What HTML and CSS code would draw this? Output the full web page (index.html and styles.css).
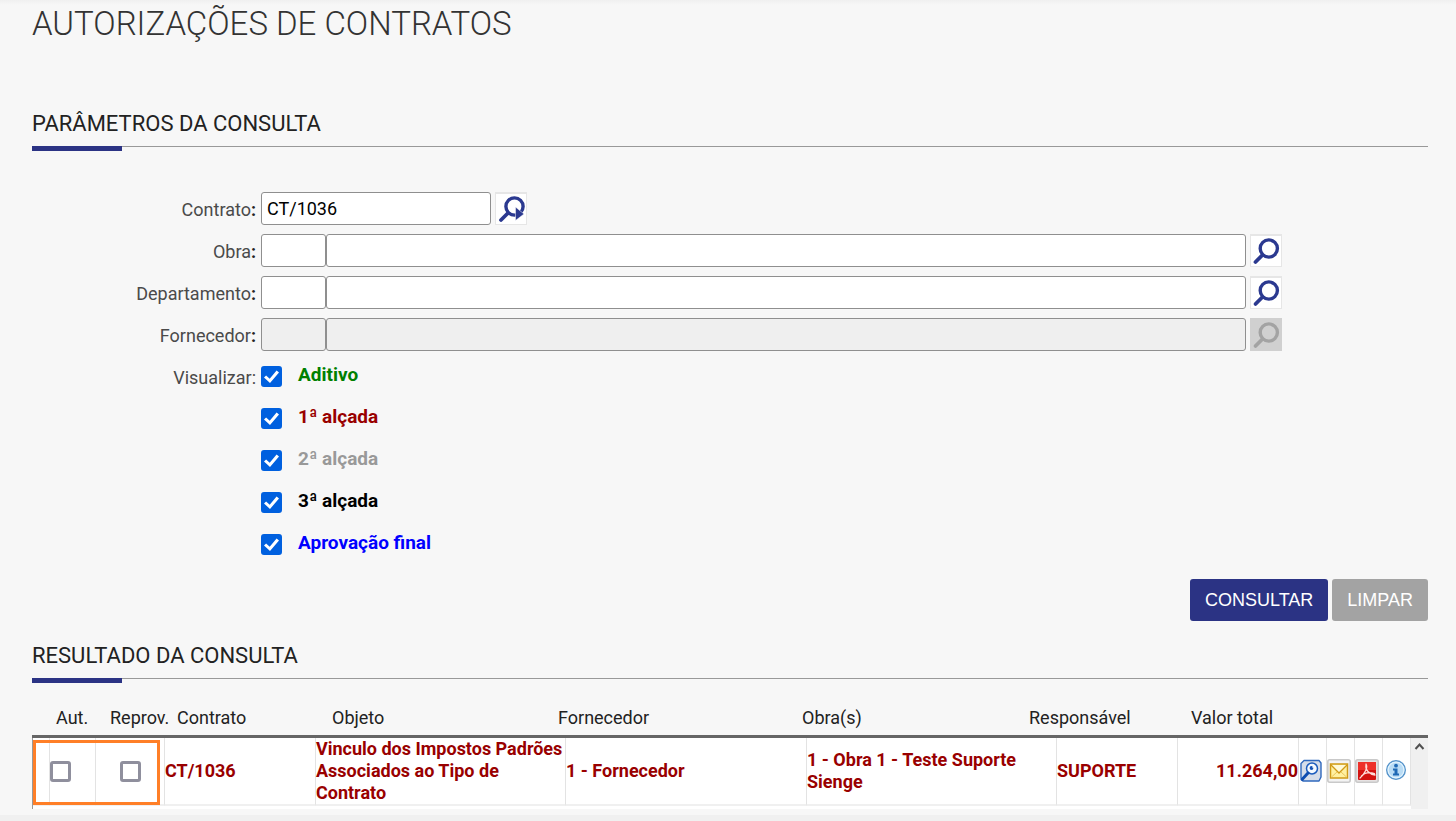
FILE: index.html
```html
<!DOCTYPE html>
<html lang="pt-BR">
<head>
  <meta charset="UTF-8">
  <meta name="viewport" content="width=device-width, initial-scale=1.0">
  <title>Autorizações de Contratos</title>
  <link rel="stylesheet" href="styles.css">
</head>
<body>
  <svg class="sprite" aria-hidden="true">
    <symbol id="icon-search" viewBox="0 0 30 30">
      <circle cx="17.800" cy="12.500" r="8.600" fill="none" stroke="currentColor" stroke-width="3.400"/>
      <path d="M11.500 19L4.500 26" fill="none" stroke="currentColor" stroke-width="3.800" stroke-linecap="round"/>
    </symbol>
    <symbol id="icon-search-go" viewBox="0 0 30 30">
      <circle cx="18.500" cy="12.500" r="8.600" fill="none" stroke="currentColor" stroke-width="3.400"/>
      <path d="M12 19L5 26" fill="none" stroke="currentColor" stroke-width="3.800" stroke-linecap="round"/>
      <path d="M19.500 13v13.500l8.500-6.500z" fill="currentColor" stroke="#fff" stroke-width=".5"/>
    </symbol>
  </svg>

  <main class="page">
    <h1>AUTORIZAÇÕES DE CONTRATOS</h1>

    <h2 class="section-title">PARÂMETROS DA CONSULTA</h2>
    <form class="filters">
      <div class="row">
        <label for="contrato">Contrato<b>:</b></label>
        <div class="field">
          <input class="text contract" id="contrato" type="text" value="CT/1036">
          <button class="lookup" type="button" aria-label="Pesquisar contrato"><svg><use href="#icon-search-go"/></svg></button>
        </div>
      </div>
      <div class="row">
        <label for="obra">Obra<b>:</b></label>
        <div class="field">
          <input class="text code" id="obra" type="text">
          <input class="text name" type="text" aria-label="Nome da obra">
          <button class="lookup" type="button" aria-label="Pesquisar obra"><svg><use href="#icon-search"/></svg></button>
        </div>
      </div>
      <div class="row">
        <label for="departamento">Departamento<b>:</b></label>
        <div class="field">
          <input class="text code" id="departamento" type="text">
          <input class="text name" type="text" aria-label="Nome do departamento">
          <button class="lookup" type="button" aria-label="Pesquisar departamento"><svg><use href="#icon-search"/></svg></button>
        </div>
      </div>
      <div class="row">
        <label for="fornecedor">Fornecedor<b>:</b></label>
        <div class="field">
          <input class="text code" id="fornecedor" type="text" disabled>
          <input class="text name" type="text" aria-label="Nome do fornecedor" disabled>
          <button class="lookup" type="button" aria-label="Pesquisar fornecedor" disabled><svg><use href="#icon-search"/></svg></button>
        </div>
      </div>
      <div class="row" role="group" aria-labelledby="visualizar">
        <span class="row-label" id="visualizar">Visualizar:</span>
        <div class="options">
          <div class="option"><input class="check" type="checkbox" id="aditivo" checked><label class="additive" for="aditivo">Aditivo</label></div>
          <div class="option"><input class="check" type="checkbox" id="alcada1" checked><label class="level-1" for="alcada1">1ª alçada</label></div>
          <div class="option"><input class="check" type="checkbox" id="alcada2" checked><label class="level-2" for="alcada2">2ª alçada</label></div>
          <div class="option"><input class="check" type="checkbox" id="alcada3" checked><label class="level-3" for="alcada3">3ª alçada</label></div>
          <div class="option"><input class="check" type="checkbox" id="final" checked><label class="final" for="final">Aprovação final</label></div>
        </div>
      </div>
      <div class="actions">
        <button class="btn primary" type="button">CONSULTAR</button>
        <button class="btn" type="reset">LIMPAR</button>
      </div>
    </form>

    <h2 class="section-title">RESULTADO DA CONSULTA</h2>
    <div class="results">
      <table class="results-head">
        <colgroup>
          <col class="h-edge"><col class="h-aut"><col class="h-reprov"><col class="h-contract"><col class="h-object">
          <col class="h-supplier"><col class="h-work"><col class="h-owner"><col class="h-total">
        </colgroup>
        <thead>
          <tr>
            <td></td>
            <th>Aut.</th>
            <th>Reprov.</th>
            <th>Contrato</th>
            <th>Objeto</th>
            <th>Fornecedor</th>
            <th>Obra(s)</th>
            <th>Responsável</th>
            <th>Valor total</th>
          </tr>
        </thead>
      </table>
      <div class="results-body">
        <div class="results-scroll">
          <table class="results-rows">
            <colgroup>
              <col class="c-edge"><col class="c-aut"><col class="c-reprov"><col class="c-contract"><col class="c-object">
              <col class="c-supplier"><col class="c-work"><col class="c-owner"><col class="c-total">
              <col class="c-icon"><col class="c-icon"><col class="c-icon"><col class="c-icon">
            </colgroup>
            <tbody>
              <tr>
                <td></td>
                <td><input class="check" type="checkbox" aria-label="Autorizar CT/1036"></td>
                <td class="center"><input class="check" type="checkbox" aria-label="Reprovar CT/1036"></td>
                <td>CT/1036</td>
                <td>Vinculo dos Impostos Padrões Associados ao Tipo de Contrato</td>
                <td>1 - Fornecedor</td>
                <td>1 - Obra 1 - Teste Suporte Sienge</td>
                <td>SUPORTE</td>
                <td class="right">11.264,00</td>
                <td>
                  <button class="icon-btn" type="button" aria-label="Detalhes">
                    <svg viewBox="0 0 24 24">
                      <path d="M5 1.500h15l2 2.500v14l-2 4H4l-2-3V4.500z" fill="#d6dde9" stroke="#2f68bd" stroke-width="1.400" stroke-linejoin="round"/>
                      <circle cx="13" cy="9.500" r="5.500" fill="#f4f9ff" stroke="#1c5cbd" stroke-width="1.500"/>
                      <circle cx="12.500" cy="9" r="1.900" fill="#1553b5"/>
                      <circle cx="14" cy="8" r=".8" fill="#fff"/>
                      <path d="M9 14l-6 6.500" stroke="#0e4cb0" stroke-width="3" stroke-linecap="round"/>
                    </svg>
                  </button>
                </td>
                <td>
                  <button class="icon-btn" type="button" aria-label="Enviar e-mail">
                    <svg viewBox="0 0 24 24">
                      <rect x=".8" y=".8" width="22.400" height="22.400" rx="2" fill="#f3f3f3" stroke="#c9c9c9" stroke-width="1.600"/>
                      <rect x="3.500" y="5" width="17" height="14" fill="#fff0a0" stroke="#d09a17" stroke-width="1.500"/>
                      <path d="M4 6l8 8 8-8" fill="#fffad8" stroke="#d09a17" stroke-width="1.300"/>
                      <path d="M4.500 18l5.500-5M19.500 18L14 13" fill="none" stroke="#ecc65a"/>
                    </svg>
                  </button>
                </td>
                <td>
                  <button class="icon-btn" type="button" aria-label="Gerar PDF">
                    <svg viewBox="0 0 24 24">
                      <rect x=".8" y=".8" width="22.400" height="22.400" rx="2" fill="#e6e2e2" stroke="#c9c9c9" stroke-width="1.600"/>
                      <rect x="3" y="3" width="18" height="18" rx="1" fill="#d3120f"/>
                      <path d="M3 3h18v8H3z" fill="#ee3029"/>
                      <path d="M11 5c2 3-.5 9-6 14M11 5.500c-1 6 4 10 9 10.500M6.500 17c3-3 8-4 13-2.500" fill="none" stroke="#ffdcd8" stroke-width="1.300" stroke-linecap="round"/>
                    </svg>
                  </button>
                </td>
                <td>
                  <button class="icon-btn" type="button" aria-label="Informações">
                    <svg viewBox="0 0 24 24">
                      <circle cx="13" cy="11" r="9.300" fill="#b9dcf5" stroke="#5593ca" stroke-width="1.400"/>
                      <circle cx="13" cy="11" r="7.900" fill="none" stroke="#e2f3fd" stroke-width="1.200"/>
                      <circle cx="13" cy="6.700" r="1.900" fill="#1f69b5"/>
                      <path d="M10 9.500h4.500v5H16V16.500h-6v-2h1.500v-3H10z" fill="#1f69b5"/>
                    </svg>
                  </button>
                </td>
              </tr>
            </tbody>
          </table>
        </div>
        <div class="scrollbar" aria-hidden="true">
          <svg viewBox="0 0 17 17"><path d="M4.500 11L8.500 6.500 12.500 11" fill="none" stroke="#505050" stroke-width="2"/></svg>
        </div>
        <div class="highlight"></div>
      </div>
    </div>
  </main>
</body>
</html>
```
FILE: styles.css
```css
* {
  box-sizing: border-box;
}
body {
  margin: 0;
  background: #f0f0f0;
  font-family: Roboto, "Liberation Sans", sans-serif;
  font-size: 18px;
  color: #222;
}
.sprite {
  display: none;
}
.page {
  padding: 4px 28px 6px 32px;
  background: linear-gradient(#f0f0f0, #f7f7f7 5px);
}
h1 {
  margin: 0 0 64px;
  font-size: 33px;
  line-height: 40px;
  font-weight: 300;
  color: #333;
}
.section-title {
  position: relative;
  margin: 0;
  padding-bottom: 6px;
  border-bottom: 1px solid #999;
  font-size: 22px;
  line-height: 32px;
  font-weight: 400;
}
.section-title::after {
  content: "";
  position: absolute;
  left: 0;
  top: 38px;
  width: 90px;
  height: 5px;
  background: #2b3384;
}

/* Filters */
.filters {
  display: flex;
  flex-direction: column;
  gap: 9px;
  padding: 45px 0 19px;
}
.row {
  display: grid;
  grid-template-columns: 224px 1fr;
  gap: 5px;
}
.row > label,
.row-label {
  padding-top: 2px;
  line-height: 31px;
  text-align: right;
  color: #4a4a4a;
}
.row b {
  color: #222;
}
.field {
  display: flex;
  padding-right: 146px;
}
.text {
  height: 33px;
  padding: 0 5px;
  border: 1px solid #8f8f8f;
  border-radius: 3px;
  background: #fff;
  font: inherit;
  color: #000;
}
.text:disabled {
  background: #efefef;
}
.contract {
  width: 230px;
}
.code {
  width: 65px;
}
.name {
  flex: 1;
  min-width: 0;
}
.lookup {
  width: 32px;
  height: 33px;
  margin-left: 4px;
  padding: 0;
  border: 1px solid #e6e6e6;
  border-top-width: 2px;
  background: #fff;
  color: #2b3990;
}
.lookup svg {
  display: block;
  width: 30px;
  height: 30px;
}
.lookup:disabled {
  border-color: #d0d0d0;
  background: #d0d0d0;
  color: #a3a3a3;
}
.options {
  display: flex;
  flex-direction: column;
  gap: 9px;
}
.option {
  display: flex;
  align-items: center;
  gap: 16px;
  height: 33px;
}
.option label {
  padding-bottom: 4px;
  font-size: 19px;
  line-height: 24px;
  font-weight: 700;
}
.additive {
  color: #008000;
}
.level-1 {
  color: #990000;
}
.level-2 {
  color: #999;
}
.level-3 {
  color: #000;
}
.final {
  color: #0000ff;
}
.check {
  appearance: none;
  display: inline-block;
  position: relative;
  width: 21px;
  height: 21px;
  margin: 0;
  border: 3px solid #8f8f9d;
  border-radius: 3px;
  background: #fff;
  vertical-align: middle;
}
.check:checked {
  border-color: #0060df;
  background: #0060df;
}
.check:checked::after {
  content: "";
  position: absolute;
  inset: 0;
  background: #fff;
  clip-path: polygon(0 56%, 14% 43%, 38% 65%, 84% 10%, 100% 24%, 40% 94%);
}
.actions {
  display: flex;
  justify-content: flex-end;
  gap: 4px;
  padding-top: 9px;
}
.btn {
  height: 42px;
  padding: 0 15px;
  border: 0;
  border-radius: 3px;
  background: #a3a3a3;
  color: #fff;
  font-family: "Liberation Sans", Arial, sans-serif;
  font-size: 18px;
}
.btn.primary {
  background: #2b3384;
}

/* Results */
.results {
  padding-top: 22px;
}
.results table {
  width: 100%;
  table-layout: fixed;
  border-collapse: separate;
  border-spacing: 0;
}
.results-head {
  border-bottom: 3px solid #666;
}
.results-head th,
.results-head td {
  height: 34px;
  padding: 0 0 2px;
  text-align: left;
  font-weight: 400;
  white-space: nowrap;
}
.h-edge { width: 24px; }
.h-aut { width: 54px; }
.h-reprov { width: 67px; }
.h-contract { width: 155px; }
.h-object { width: 226px; }
.h-supplier { width: 244px; }
.h-work { width: 227px; }
.h-owner { width: 162px; }
.h-total { width: 237px; }
.results-body {
  position: relative;
  display: flex;
  border-left: 1px solid #999;
  background: #fff;
}
.results-scroll {
  flex: 1;
  min-width: 0;
  padding-bottom: 3px;
}
.results-rows td {
  height: 68px;
  padding: 0;
  border-right: 1px solid #e3e3e3;
  border-bottom: 2px solid #f0f0f0;
  line-height: 22px;
  font-weight: 700;
  color: #990000;
}
.results-rows .center {
  text-align: center;
}
.results-rows .right {
  text-align: right;
}
.c-edge { width: 17px; }
.c-aut { width: 46px; }
.c-reprov { width: 69px; }
.c-contract { width: 151px; }
.c-object { width: 250px; }
.c-supplier { width: 241px; }
.c-work { width: 250px; }
.c-owner { width: 121px; }
.c-total { width: 121px; }
.c-icon { width: 28px; }
.icon-btn {
  display: block;
  width: 24px;
  height: 24px;
  padding: 0;
  border: 0;
  background: none;
}
.icon-btn svg {
  display: block;
  width: 24px;
  height: 24px;
}
.scrollbar {
  width: 17px;
  background: #f0f0f0;
}
.scrollbar svg {
  display: block;
  width: 17px;
  height: 17px;
}
/* Marks the authorise / reject boxes */
.highlight {
  position: absolute;
  left: 0;
  top: 2px;
  width: 127px;
  height: 65px;
  border: 3px solid #ff7f27;
  pointer-events: none;
}
```
